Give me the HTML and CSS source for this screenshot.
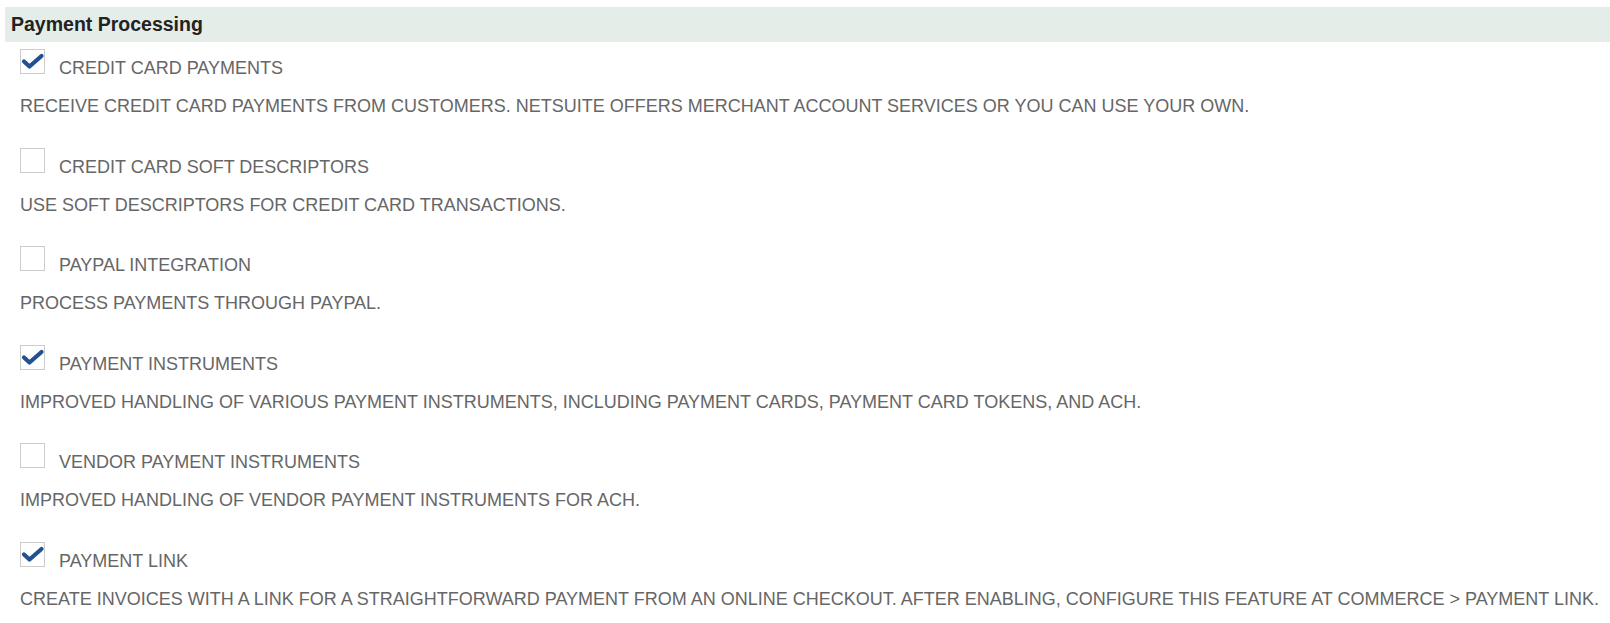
FILE: index.html
```html
<!DOCTYPE html>
<html lang="en">
<head>
    <meta charset="UTF-8">
    <title>Payment Processing</title>
    <link rel="stylesheet" href="styles.css">
</head>
<body>
    <div class="section">
        <div class="section-header">Payment Processing</div>

        <div class="feature">
            <div class="feature-row">
                <span class="checkbox checked">
                    <svg viewBox="0 0 25 25" width="25" height="25"><path d="M4 12.5 L9.5 17.5 L21.5 7"/></svg>
                </span>
                <span class="feature-label">CREDIT CARD PAYMENTS</span>
            </div>
            <p class="feature-desc">RECEIVE CREDIT CARD PAYMENTS FROM CUSTOMERS. NETSUITE OFFERS MERCHANT ACCOUNT SERVICES OR YOU CAN USE YOUR OWN.</p>
        </div>

        <div class="feature">
            <div class="feature-row">
                <span class="checkbox"></span>
                <span class="feature-label">CREDIT CARD SOFT DESCRIPTORS</span>
            </div>
            <p class="feature-desc">USE SOFT DESCRIPTORS FOR CREDIT CARD TRANSACTIONS.</p>
        </div>

        <div class="feature">
            <div class="feature-row">
                <span class="checkbox"></span>
                <span class="feature-label">PAYPAL INTEGRATION</span>
            </div>
            <p class="feature-desc">PROCESS PAYMENTS THROUGH PAYPAL.</p>
        </div>

        <div class="feature">
            <div class="feature-row">
                <span class="checkbox checked">
                    <svg viewBox="0 0 25 25" width="25" height="25"><path d="M4 12.5 L9.5 17.5 L21.5 7"/></svg>
                </span>
                <span class="feature-label">PAYMENT INSTRUMENTS</span>
            </div>
            <p class="feature-desc">IMPROVED HANDLING OF VARIOUS PAYMENT INSTRUMENTS, INCLUDING PAYMENT CARDS, PAYMENT CARD TOKENS, AND ACH.</p>
        </div>

        <div class="feature">
            <div class="feature-row">
                <span class="checkbox"></span>
                <span class="feature-label">VENDOR PAYMENT INSTRUMENTS</span>
            </div>
            <p class="feature-desc">IMPROVED HANDLING OF VENDOR PAYMENT INSTRUMENTS FOR ACH.</p>
        </div>

        <div class="feature">
            <div class="feature-row">
                <span class="checkbox checked">
                    <svg viewBox="0 0 25 25" width="25" height="25"><path d="M4 12.5 L9.5 17.5 L21.5 7"/></svg>
                </span>
                <span class="feature-label">PAYMENT LINK</span>
            </div>
            <p class="feature-desc">CREATE INVOICES WITH A LINK FOR A STRAIGHTFORWARD PAYMENT FROM AN ONLINE CHECKOUT. AFTER ENABLING, CONFIGURE THIS FEATURE AT COMMERCE &gt; PAYMENT LINK.</p>
        </div>
    </div>
</body>
</html>
```

FILE: styles.css
```css
body {
    font-family: "Liberation Sans", Arial, sans-serif;
    margin: 0;
    padding: 0;
    background-color: #ffffff;
    color: #666666;
}

.section {
    padding: 7px 0 0 5px;
}

.section-header {
    height: 35px;
    line-height: 35px;
    padding-left: 6px;
    margin-bottom: 7px;
    background-color: #e5ede8;
    color: #222222;
    font-size: 19.5px;
    font-weight: bold;
}

.feature {
    padding-left: 15px;
    margin-bottom: 31.5px;
}

.feature-row {
    display: flex;
    align-items: baseline;
}

.checkbox {
    display: block;
    box-sizing: border-box;
    width: 25px;
    height: 25px;
    border: 1px solid #cccccc;
    background-color: #ffffff;
    position: relative;
}

.checkbox svg {
    position: absolute;
    left: -1px;
    top: -1px;
}

.checkbox path {
    fill: none;
    stroke: #23508f;
    stroke-width: 4.2;
    stroke-linecap: round;
    stroke-linejoin: round;
}

.feature-label {
    margin-left: 14px;
    font-size: 18px;
    line-height: 20px;
}

.feature-desc {
    margin: 18px 0 0 0;
    font-size: 18px;
    line-height: 20px;
}
```
